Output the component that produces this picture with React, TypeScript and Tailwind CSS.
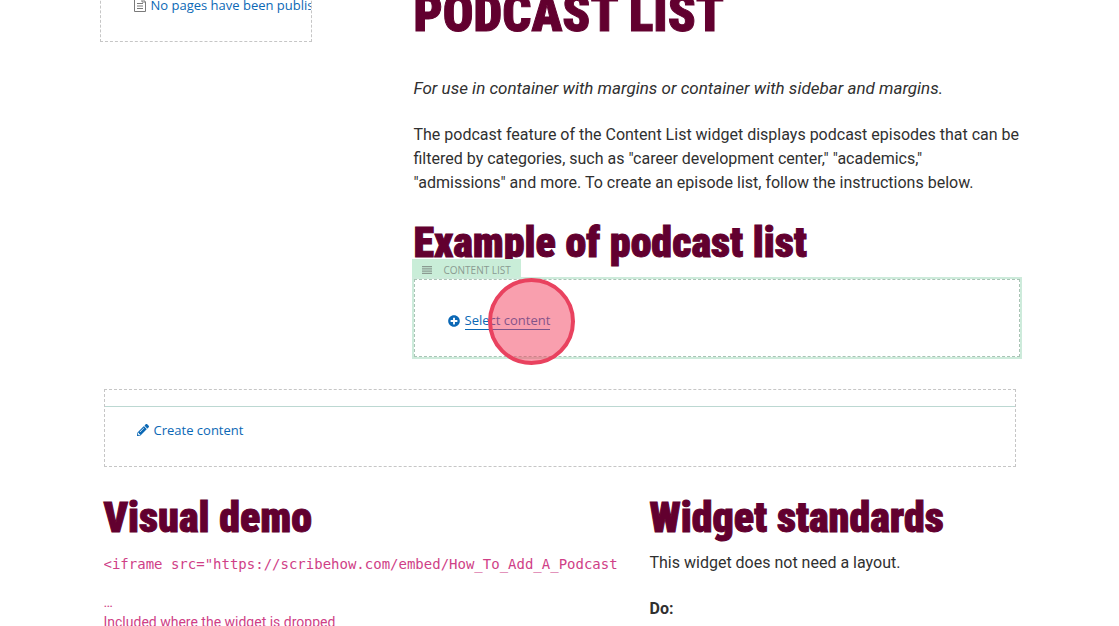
import { FaPencilAlt, FaPlusCircle } from "react-icons/fa";

const heading =
  "font-['Roboto_Condensed','Liberation_Sans_Narrow',Roboto,sans-serif] font-black text-[#62002f] [-webkit-text-stroke:1px_#62002f]";
const action = "font-['Open_Sans',sans-serif] text-[13px] leading-5 text-[#0b68b5]";

function PageIcon() {
  return (
    <svg viewBox="0 0 12 14" className="h-3.5 w-3 shrink-0" fill="none" stroke="#7a7a7a">
      <path d="M.5.5h7.5l3.5 3.5v9.5H.5zM8 .5V4h3.5M3 5.5h6M3 8h6M3 10.5h6" />
    </svg>
  );
}

function DragIcon() {
  return (
    <svg viewBox="0 0 10 8" className="h-2 w-2.5 shrink-0" stroke="currentColor" strokeWidth="1.2">
      <path d="M0 .6h10M0 2.9h10M0 5.2h10M0 7.4h10" />
    </svg>
  );
}

function PageNav() {
  return (
    <aside className="-ml-1 h-[46px] w-[212px] shrink-0 overflow-hidden border border-dashed border-[#c6c6c6] pl-8">
      <a href="#pages" className={`-mt-0.5 flex items-center gap-[5px] whitespace-nowrap pl-px ${action}`}>
        <PageIcon />
        No pages have been published
      </a>
    </aside>
  );
}

function ContentListWidget() {
  return (
    <section className="relative -ml-0.5 -mt-2">
      <div className="flex h-[18px] w-fit items-center gap-3 bg-[#c9edd8] px-2.5 pt-[3px] font-['Open_Sans',sans-serif] text-[10px] text-[#8a9a91]">
        <DragIcon />
        CONTENT LIST
      </div>
      <div className="border-2 border-[#cdebdb]">
        <div className="flex h-[78px] items-center border border-dashed border-[#a9c4b5] px-8 pt-1.5">
          <a href="#select" className={`flex items-center gap-[5px] pl-px ${action}`}>
            <FaPlusCircle className="size-3" />
            <span className="border-b border-[#0b68b5] leading-[17px]">Select content</span>
          </a>
        </div>
      </div>
      <span className="pointer-events-none absolute left-[76px] top-[19px] size-[87px] rounded-full border-4 border-[#e9425f] bg-[#f43f5e]/50" />
    </section>
  );
}

export default function App() {
  return (
    <div className="h-screen overflow-hidden bg-white font-[Roboto,sans-serif] text-base leading-6 text-[#303030]">
      <div className="mx-auto max-w-[912px]">
        <div className="-mt-1 flex gap-[102px]">
          <PageNav />
          <main className="-mr-1.5 min-w-0 flex-1">
            <h1 className={`-mt-1.5 text-[51px] leading-12 ${heading}`}>PODCAST LIST</h1>
            <p className="mt-[38px] text-[17px] italic">
              For use in container with margins or container with sidebar and margins.
            </p>
            <p className="mt-[23px]">
              The podcast feature of the Content List widget displays podcast episodes that can be filtered by
              categories, such as "career development center," "academics,"
              <br />
              "admissions" and more. To create an episode list, follow the instructions below.
            </p>
            <h2 className={`mt-6 text-[42px] leading-12 ${heading}`}>Example of podcast list</h2>
            <ContentListWidget />
          </main>
        </div>

        <section className="mt-[30px] h-[78px] border border-dashed border-[#c6c6c6]">
          <div className="mt-4 border-t border-[#bcd8d2] px-8 pt-[13px]">
            <a href="#create" className={`flex w-fit items-center gap-[5px] ${action}`}>
              <FaPencilAlt className="size-3" />
              Create content
            </a>
          </div>
        </section>

        <div className="mt-[27px] flex gap-[22px]">
          <section className="min-w-0 flex-1">
            <h2 className={`text-[42px] leading-12 ${heading}`}>Visual demo</h2>
            <code className="mt-2.5 block overflow-hidden whitespace-nowrap font-['DejaVu_Sans_Mono',monospace] text-sm leading-6 text-[#cf3f87]">
              {'<iframe src="https://scribehow.com/embed/How_To_Add_A_Podcast'}
            </code>
            <p className="mt-4 text-sm leading-5 text-[#cf3f87]">
              …<br />
              Included where the widget is dropped
            </p>
          </section>
          <section className="w-[366px] shrink-0">
            <h2 className={`text-[42px] leading-12 ${heading}`}>Widget standards</h2>
            <p className="mt-[9px]">This widget does not need a layout.</p>
            <p className="mt-[22px] font-bold">Do:</p>
          </section>
        </div>
      </div>
    </div>
  );
}
